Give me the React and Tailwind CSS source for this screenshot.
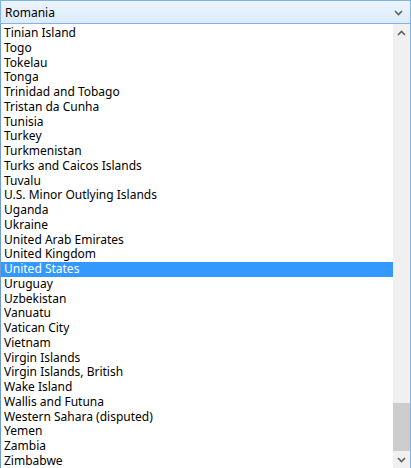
import React from 'react';

const countries = [
    'Tinian Island', 'Togo', 'Tokelau', 'Tonga', 'Trinidad and Tobago', 'Tristan da Cunha',
    'Tunisia', 'Turkey', 'Turkmenistan', 'Turks and Caicos Islands', 'Tuvalu',
    'U.S. Minor Outlying Islands', 'Uganda', 'Ukraine', 'United Arab Emirates', 'United Kingdom',
    'United States', 'Uruguay', 'Uzbekistan', 'Vanuatu', 'Vatican City', 'Vietnam',
    'Virgin Islands', 'Virgin Islands, British', 'Wake Island', 'Wallis and Futuna',
    'Western Sahara (disputed)', 'Yemen', 'Zambia', 'Zimbabwe',
];

function Chevron({ up }) {
    return (
        <svg width="9" height="6" viewBox="0 0 9 6" className={up ? 'rotate-180' : ''}>
            <path d="M1 1l3.5 3.5L8 1" fill="none" stroke="#5f5f5f" strokeWidth="1.6" />
        </svg>
    );
}

export default function App() {
    return (
        <div className="w-[411px] h-[468px] overflow-hidden bg-white flex flex-col text-[12px] text-black" style={{ fontFamily: '"Noto Sans", "Open Sans", sans-serif' }}>
            <div className="h-[24px] shrink-0 flex items-center justify-between pl-[4px] pr-[7px] pt-[2px] border border-[#7eb4ea] bg-gradient-to-b from-[#ecf4fc] to-[#dcecfc]">
                <span className="leading-[16px]">Romania</span>
                <Chevron />
            </div>
            <div className="flex-1 flex min-h-0 border-l border-r border-[#7eb4ea] border-l-[#6f9bd0]">
                <div className="flex-1 flex flex-col pt-[2px] overflow-hidden">
                    {countries.map(c => (
                        <div
                            key={c}
                            className={`h-[14.75px] shrink-0 pl-[3px] leading-[14.75px] whitespace-nowrap ${c === 'United States' ? 'bg-[#3399ff] text-white' : ''}`}
                        >
                            {c}
                        </div>
                    ))}
                </div>
                <div className="w-[17px] shrink-0 bg-[#f0f0f0] flex flex-col items-center">
                    <div className="h-[17px] flex items-center justify-center">
                        <Chevron up />
                    </div>
                    <div className="flex-1" />
                    <div className="w-[17px] h-[48px] bg-[#cdcdcd]" />
                    <div className="h-[17px] flex items-center justify-center">
                        <Chevron />
                    </div>
                </div>
            </div>
        </div>
    );
}
